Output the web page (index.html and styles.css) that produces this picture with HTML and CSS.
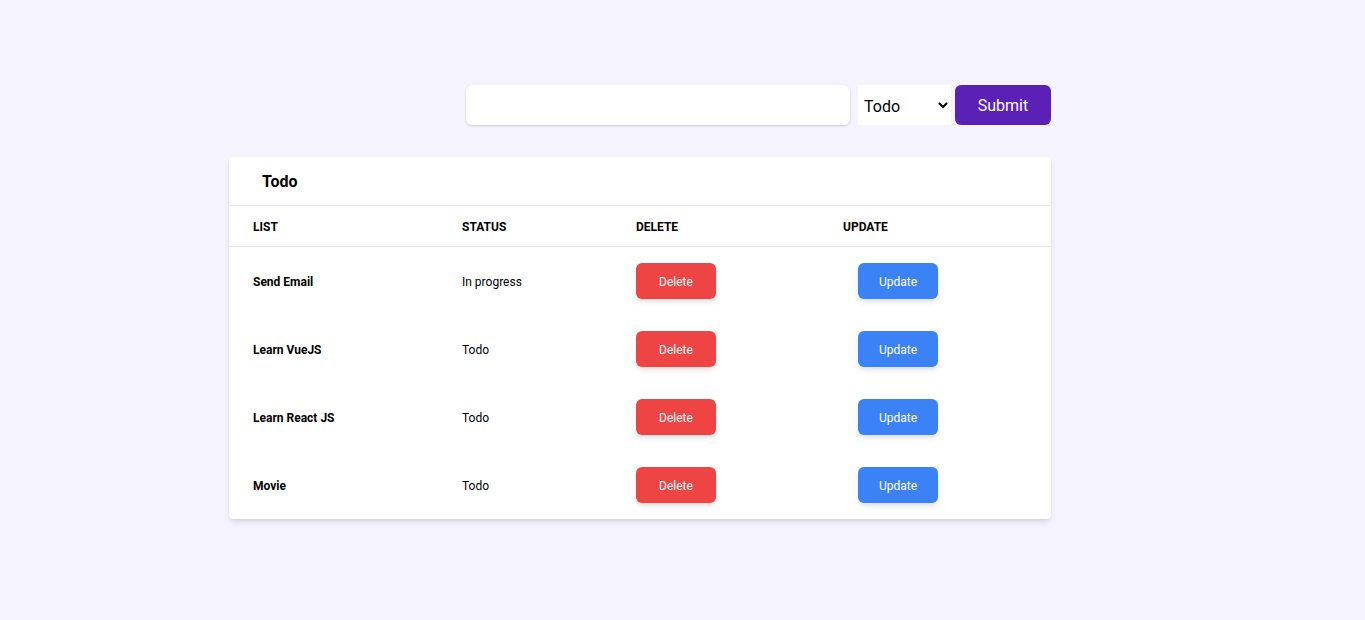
FILE: index.html
```html
<!DOCTYPE html>
<html>
<head>
<meta charset="utf-8">
<link rel="stylesheet" href="styles.css">
</head>
<body>
<div class="page">
  <form class="form">
    <input class="text-input" type="text">
    <select class="status-select">
      <option>Todo</option>
      <option>In progress</option>
    </select>
    <button type="button" class="submit">Submit</button>
  </form>
  <div class="card">
    <div class="card-title">Todo</div>
    <div class="row head">
      <div>LIST</div><div>STATUS</div><div>DELETE</div><div>UPDATE</div>
    </div>
    <div class="row">
      <div class="name">Send Email</div><div>In progress</div>
      <div class="bc"><button class="btn del">Delete</button></div>
      <div class="bc upd-cell"><button class="btn upd">Update</button></div>
    </div>
    <div class="row">
      <div class="name">Learn VueJS</div><div>Todo</div>
      <div class="bc"><button class="btn del">Delete</button></div>
      <div class="bc upd-cell"><button class="btn upd">Update</button></div>
    </div>
    <div class="row">
      <div class="name">Learn React JS</div><div>Todo</div>
      <div class="bc"><button class="btn del">Delete</button></div>
      <div class="bc upd-cell"><button class="btn upd">Update</button></div>
    </div>
    <div class="row">
      <div class="name">Movie</div><div>Todo</div>
      <div class="bc"><button class="btn del">Delete</button></div>
      <div class="bc upd-cell"><button class="btn upd">Update</button></div>
    </div>
  </div>
</div>
</body>
</html>
```
FILE: styles.css
```css
* { box-sizing: border-box; }
html, body { margin: 0; padding: 0; }
body {
  background: #f4f3fe;
  font-family: Roboto, "Liberation Sans", sans-serif;
  color: #000;
  height: 620px;
}
.page {
  width: 822px;
  margin-left: 229px;
  padding-top: 85px;
}
.form {
  display: flex;
  justify-content: flex-end;
  align-items: center;
  height: 40px;
  margin: 0;
}
.text-input {
  width: 384px;
  height: 40px;
  border: none;
  border-radius: 6px;
  background: #fff;
  box-shadow: 0 1px 3px rgba(0,0,0,0.12), 0 1px 2px rgba(0,0,0,0.06);
  outline: none;
  font-size: 16px;
  padding: 0 12px;
}
.status-select {
  margin-left: 8px;
  width: 93px;
  height: 40px;
  border: none;
  background: #fff;
  font-family: Roboto, sans-serif;
  font-size: 16px;
  color: #000;
  padding: 2px 0 0 2px;
  border-radius: 0;
}
.submit {
  margin-left: 4px;
  width: 96px;
  height: 40px;
  border: none;
  border-radius: 6px;
  background: #5b21b6;
  color: #fff;
  font-family: Roboto, sans-serif;
  font-size: 16px;
}
.card {
  margin-top: 32px;
  background: #fff;
  border-radius: 4px;
  box-shadow: 0 4px 6px -1px rgba(0,0,0,0.1), 0 2px 4px -1px rgba(0,0,0,0.06);
}
.card-title {
  height: 49px;
  padding-left: 33px;
  display: flex;
  align-items: center;
  font-size: 16px;
  font-weight: 700;
  border-bottom: 1px solid #e5e5ea;
}
.row {
  display: grid;
  grid-template-columns: 209px 174px 207px 232px;
  align-items: center;
  height: 68px;
  font-size: 12px;
}
.row > div { padding-left: 24px; padding-top: 2px; }
.row > .bc { padding-top: 0; }
.row.head {
  height: 41px;
  font-weight: 700;
  border-bottom: 1px solid #e5e5ea;
}
.name { font-weight: 700; }
.upd-cell { padding-left: 39px !important; }
.btn {
  width: 80px;
  height: 36px;
  border: none;
  border-radius: 6px;
  color: #fff;
  font-family: Roboto, sans-serif;
  font-size: 12px;
  padding-top: 2px;
  box-shadow: 0 4px 6px -1px rgba(0,0,0,0.1), 0 2px 4px -1px rgba(0,0,0,0.06);
  display: block;
}
.del { background: #ef4444; }
.upd { background: #3b82f6; }
```
